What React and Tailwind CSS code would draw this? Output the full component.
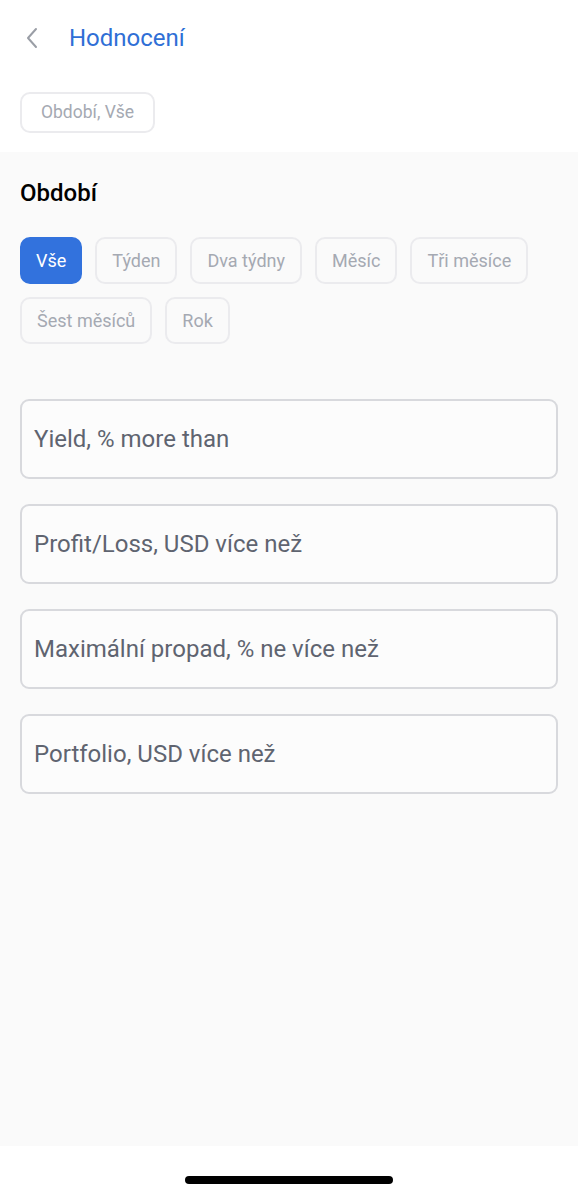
import { useState } from 'react';

const periods = ['Vše', 'Týden', 'Dva týdny', 'Měsíc', 'Tři měsíce', 'Šest měsíců', 'Rok'];
const fields = [
  'Yield, % more than',
  'Profit/Loss, USD více než',
  'Maximální propad, % ne více než',
  'Portfolio, USD více než',
];

export default function App() {
  const [period, setPeriod] = useState('Vše');

  return (
    <div className="w-[578px] h-[1188px] bg-white flex flex-col overflow-hidden" style={{ fontFamily: 'Roboto, "Noto Sans", sans-serif' }}>
      <header className="h-[76px] flex items-center pl-[22px]">
        <button className="w-[20px] h-[24px] flex items-center justify-center text-[#9a9ea6]">
          <svg width="14" height="22" viewBox="0 0 14 22" fill="none" stroke="currentColor" strokeWidth="2" strokeLinecap="round" strokeLinejoin="round">
            <polyline points="11,2 3,11 11,20" />
          </svg>
        </button>
        <h1 className="ml-[27px] text-[24px] text-[#2f6fd6] leading-none">Hodnocení</h1>
      </header>

      <div className="px-[20px] pt-[16px] pb-[19px]">
        <span className="inline-flex items-center h-[41px] px-[19px] rounded-[10px] border-2 border-[#ebebee] text-[17.5px] text-[#a5a9b2]">
          Období, Vše
        </span>
      </div>

      <main className="flex-1 bg-[#fafafa] px-[20px] pt-[28px]">
        <h2 className="text-[24px] font-medium text-black leading-[26px]">Období</h2>

        <div className="mt-[31px] flex flex-wrap gap-[13px] w-[530px]">
          {periods.map(p => (
            <button
              key={p}
              onClick={() => setPeriod(p)}
              className={p === period
                ? 'h-[47px] px-[14px] rounded-[10px] border-2 border-[#3272dd] bg-[#3272dd] text-white text-[18px]'
                : 'h-[47px] px-[15px] rounded-[10px] border-2 border-[#ebebee] text-[#a5a9b2] text-[18px]'}
            >
              {p}
            </button>
          ))}
        </div>

        <div className="mt-[55px] flex flex-col gap-[25px]">
          {fields.map(f => (
            <div key={f} className="h-[80px] rounded-[9px] border-2 border-[#d8d9dd] bg-[#fcfcfc] flex items-center px-[12px]">
              <span className="text-[24px] text-[#5f6470]">{f}</span>
            </div>
          ))}
        </div>
      </main>

      <footer className="h-[42px] flex items-end justify-center pb-[4px]">
        <div className="w-[208px] h-[8px] rounded-full bg-black" />
      </footer>
    </div>
  );
}
